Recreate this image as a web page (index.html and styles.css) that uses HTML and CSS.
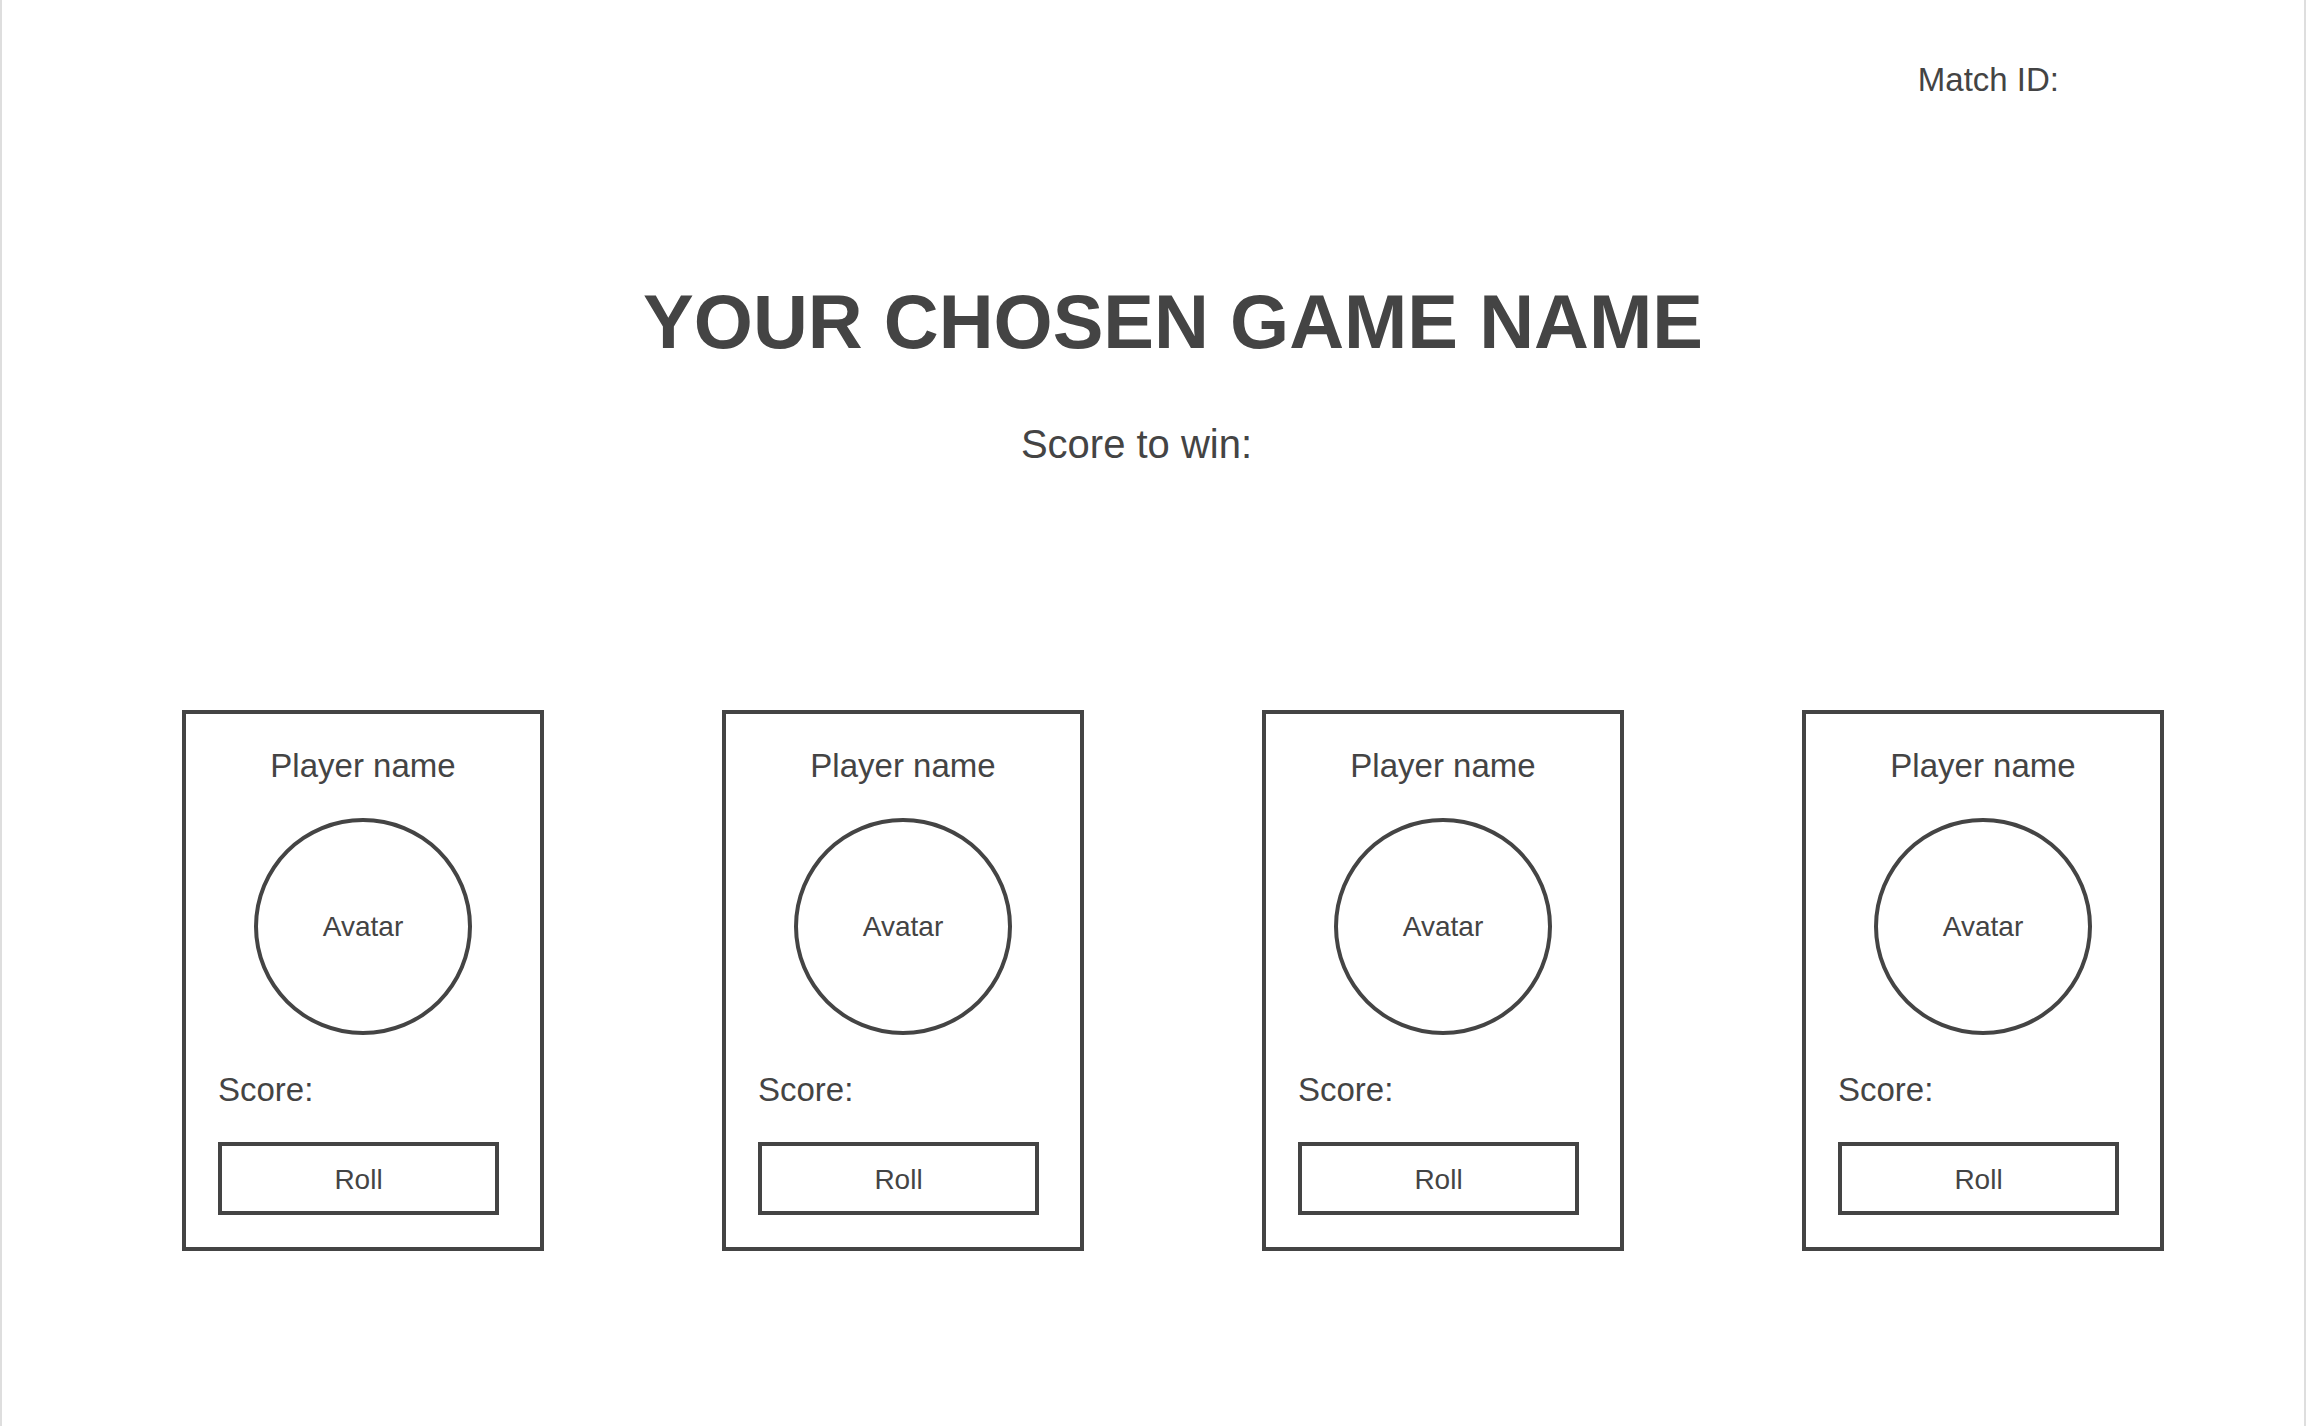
FILE: index.html
```html
<!DOCTYPE html>
<html lang="en">
<head>
<meta charset="utf-8">
<title>Your Chosen Game Name</title>
<link rel="stylesheet" href="styles.css">
</head>
<body>
<div class="page">
  <header class="topbar">
    <span class="match-id">Match ID:</span>
  </header>
  <main class="content">
    <h1 class="title">YOUR CHOSEN GAME NAME</h1>
    <p class="goal">Score to win:</p>
    <section class="players">
      <div class="card">
        <div class="player-name">Player name</div>
        <div class="avatar">Avatar</div>
        <div class="score">Score:</div>
        <button class="roll">Roll</button>
      </div>
      <div class="card">
        <div class="player-name">Player name</div>
        <div class="avatar">Avatar</div>
        <div class="score">Score:</div>
        <button class="roll">Roll</button>
      </div>
      <div class="card">
        <div class="player-name">Player name</div>
        <div class="avatar">Avatar</div>
        <div class="score">Score:</div>
        <button class="roll">Roll</button>
      </div>
      <div class="card">
        <div class="player-name">Player name</div>
        <div class="avatar">Avatar</div>
        <div class="score">Score:</div>
        <button class="roll">Roll</button>
      </div>
    </section>
  </main>
</div>
</body>
</html>
```

FILE: styles.css
```css
html, body {
  margin: 0;
  padding: 0;
  background: #ffffff;
}

body {
  font-family: "Liberation Sans", Arial, sans-serif;
  color: #444444;
}

.page {
  box-sizing: border-box;
  width: 2306px;
  height: 1426px;
  border-left: 2px solid #dedede;
  border-right: 2px solid #dedede;
  overflow: hidden;
}

.topbar {
  display: flex;
  justify-content: flex-end;
  padding: 61px 245px 0 0;
}

.match-id {
  font-size: 33px;
  line-height: 38px;
}

.content {
  padding: 0 140px 0 180px;
}

.title {
  margin: 179px 0 0 0;
  font-size: 76px;
  line-height: 87px;
  font-weight: bold;
  text-align: center;
}

.goal {
  margin: 56px 0 0 0;
  padding-right: 73px;
  font-size: 40px;
  line-height: 46px;
  text-align: center;
}

.players {
  display: flex;
  gap: 178px;
  margin-top: 243px;
}

.card {
  box-sizing: border-box;
  width: 362px;
  height: 541px;
  border: 4px solid #444444;
  padding: 33px 32px 32px 32px;
  display: flex;
  flex-direction: column;
  align-items: flex-start;
}

.player-name {
  align-self: stretch;
  font-size: 33px;
  line-height: 38px;
  text-align: center;
}

.avatar {
  box-sizing: border-box;
  align-self: center;
  width: 218px;
  height: 217px;
  margin-top: 33px;
  border: 4px solid #444444;
  border-radius: 50%;
  display: flex;
  align-items: center;
  justify-content: center;
  font-size: 28px;
  line-height: 32px;
}

.score {
  margin-top: 36px;
  font-size: 33px;
  line-height: 38px;
}

.roll {
  box-sizing: border-box;
  width: 281px;
  height: 73px;
  margin-top: 33px;
  border: 4px solid #444444;
  background: #ffffff;
  color: #444444;
  font-family: "Liberation Sans", Arial, sans-serif;
  font-size: 28px;
  line-height: 32px;
  padding: 2px 0 0 0;
}
```
